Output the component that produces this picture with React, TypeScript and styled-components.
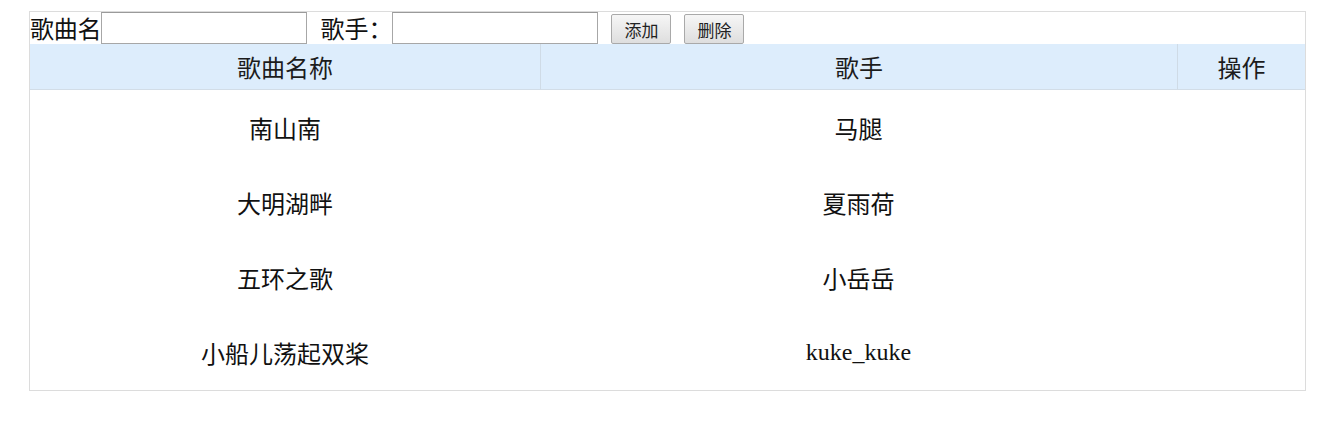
import React from "react";
import styled, { createGlobalStyle } from "styled-components";

const Global = createGlobalStyle`
  html, body { margin: 0; padding: 0; background: #fff; }
  body { font-family: "Liberation Serif", "Noto Sans CJK SC", serif; color: #111; }
`;

const Panel = styled.div`
  box-sizing: border-box;
  width: 1277px;
  margin: 11px 0 0 29px;
  border: 1px solid #dcdcdc;
`;

const Toolbar = styled.div`
  display: flex;
  align-items: center;
  height: 32px;
`;

const Label = styled.span<{ $gap?: number; $tight?: boolean }>`
  font-family: "Noto Sans CJK SC", sans-serif;
  font-size: 24px;
  line-height: 32px;
  letter-spacing: ${(p) => (p.$tight ? "-0.2px" : "0")};
  margin-left: ${(p) => p.$gap ?? 0}px;
  color: #111;
`;

const TextInput = styled.input`
  box-sizing: border-box;
  width: 206px;
  height: 32px;
  margin: 0;
  padding: 2px 4px;
  border: 1px solid #a7a7a7;
  border-top-color: #9a9a9a;
  background: #fff;
  font-size: 16px;
  outline: none;
`;

const Button = styled.button`
  box-sizing: border-box;
  width: 60px;
  height: 30px;
  margin: 2px 0 0 13px;
  padding: 0;
  border: 1px solid #a9a9a9;
  border-radius: 2px;
  background: linear-gradient(#f6f6f6, #dedede);
  font-family: "Noto Sans CJK SC", sans-serif;
  font-size: 17px;
  color: #222;
`;

const Grid = styled.div`
  display: grid;
  grid-template-columns: 510px 637px 1fr;
`;

const HeadCell = styled.div<{ $divider?: boolean }>`
  height: 46px;
  box-sizing: border-box;
  display: flex;
  align-items: center;
  justify-content: center;
  background: #ddedfc;
  border-bottom: 1px solid #d2dde7;
  border-left: ${(p) => (p.$divider ? "1px solid #cfdbe6" : "none")};
  font-family: "Noto Sans CJK SC", sans-serif;
  font-size: 24px;
  color: #1c1c1c;
`;

const Cell = styled.div`
  height: 75px;
  display: flex;
  align-items: center;
  justify-content: center;
  font-size: 24px;
  font-family: "Liberation Serif", "Noto Sans CJK SC", serif;
  color: #111;
`;

const CjkText = styled.span`
  font-family: "Noto Sans CJK SC", sans-serif;
  font-size: 24px;
`;

const songs = [
  { name: "南山南", singer: "马腿" },
  { name: "大明湖畔", singer: "夏雨荷" },
  { name: "五环之歌", singer: "小岳岳" },
  { name: "小船儿荡起双桨", singer: "kuke_kuke" },
];

const isLatin = (s: string) => /^[\x00-\x7f]+$/.test(s);

const Text = ({ v }: { v: string }) =>
  isLatin(v) ? <>{v}</> : <CjkText>{v}</CjkText>;

export default function App() {
  return (
    <>
      <Global />
      <Panel>
        <Toolbar>
          <Label $tight>歌曲名</Label>
          <TextInput type="text" />
          <Label $gap={13}>歌手：</Label>
          <TextInput type="text" />
          <Button>添加</Button>
          <Button>删除</Button>
        </Toolbar>
        <Grid>
          <HeadCell>歌曲名称</HeadCell>
          <HeadCell $divider>歌手</HeadCell>
          <HeadCell $divider>操作</HeadCell>
          {songs.map((s) => (
            <React.Fragment key={s.name}>
              <Cell>
                <Text v={s.name} />
              </Cell>
              <Cell>
                <Text v={s.singer} />
              </Cell>
              <Cell />
            </React.Fragment>
          ))}
        </Grid>
      </Panel>
    </>
  );
}
